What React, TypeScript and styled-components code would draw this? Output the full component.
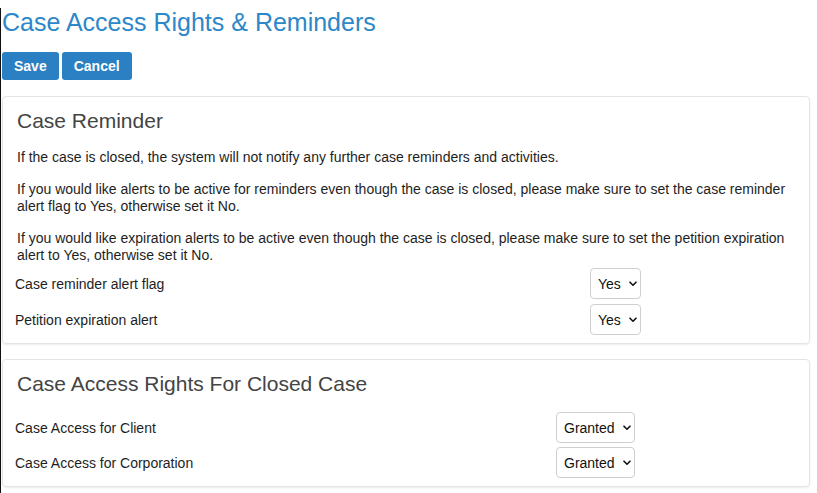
import React from "react";
import styled, { createGlobalStyle } from "styled-components";

const GlobalStyle = createGlobalStyle`
  html, body {
    margin: 0;
    padding: 0;
    background: #ffffff;
  }
  body {
    font-family: "Liberation Sans", Arial, Helvetica, sans-serif;
    color: #222;
  }
`;

const Page = styled.div`
  min-height: 493px;
  box-sizing: border-box;
  border-left: 1px solid #111;
  padding: 0 6px 0 1px;
`;

const Title = styled.h1`
  margin: 8px 0 0;
  font-size: 25px;
  line-height: 28px;
  font-weight: 400;
  color: #2d87c8;
`;

const Toolbar = styled.div`
  display: flex;
  gap: 3px;
  margin-top: 16px;
`;

const Button = styled.button`
  height: 28px;
  padding: 0 12px;
  border: none;
  border-radius: 3px;
  background: #2a80c2;
  color: #fff;
  font-family: "Liberation Sans", Arial, sans-serif;
  font-size: 14px;
  font-weight: 700;
  cursor: pointer;
`;

const Card = styled.section<{ $top: number }>`
  margin-top: ${(p) => p.$top}px;
  width: 808px;
  box-sizing: border-box;
  border: 1px solid #e4e4e4;
  border-radius: 4px;
  box-shadow: 0 1px 2px rgba(0, 0, 0, 0.08);
  padding: 12px 14px 8px;
`;

const CardTitle = styled.h2<{ $gap: number }>`
  margin: 0 0 ${(p) => p.$gap}px;
  font-size: 21px;
  line-height: 24px;
  font-weight: 400;
  color: #444;
`;

const Notes = styled.div`
  display: flex;
  flex-direction: column;
  gap: 15px;
  margin-bottom: 4px;
`;

const Note = styled.p`
  margin: 0;
  font-size: 14px;
  line-height: 17px;
  color: #1e1e1e;
`;

const Rows = styled.div<{ $gap: number }>`
  display: flex;
  flex-direction: column;
  gap: ${(p) => p.$gap}px;
  margin-left: -2px;
`;

const Row = styled.div<{ $labelWidth: number }>`
  display: grid;
  grid-template-columns: ${(p) => p.$labelWidth}px auto;
  align-items: center;
  justify-content: start;
`;

const Label = styled.span`
  font-size: 14px;
  color: #1e1e1e;
`;

const SelectWrap = styled.div`
  position: relative;
  display: inline-flex;
`;

const Select = styled.select`
  appearance: none;
  -webkit-appearance: none;
  height: 31px;
  padding: 0 19px 0 7px;
  border: 1px solid #cfcfcf;
  border-radius: 4px;
  background: #fff;
  color: #111;
  font-family: "Liberation Sans", Arial, sans-serif;
  font-size: 14px;
`;

const Chevron = styled.svg`
  position: absolute;
  right: 4px;
  top: 13px;
  pointer-events: none;
`;

interface DropdownProps {
  value: string;
  options: string[];
}

const Dropdown: React.FC<DropdownProps> = ({ value, options }) => (
  <SelectWrap>
    <Select defaultValue={value}>
      {options.map((o) => (
        <option key={o}>{o}</option>
      ))}
    </Select>
    <Chevron width="8" height="6" viewBox="0 0 8 6">
      <path d="M1 1.2 L4 4.2 L7 1.2" fill="none" stroke="#111" strokeWidth="1.6" strokeLinecap="round" strokeLinejoin="round" />
    </Chevron>
  </SelectWrap>
);

const reminderRows = [
  { label: "Case reminder alert flag", value: "Yes" },
  { label: "Petition expiration alert", value: "Yes" },
];

const accessRows = [
  { label: "Case Access for Client", value: "Granted" },
  { label: "Case Access for Corporation", value: "Granted" },
];

export default function App() {
  return (
    <Page>
      <GlobalStyle />
      <Title>Case Access Rights &amp; Reminders</Title>
      <Toolbar>
        <Button>Save</Button>
        <Button>Cancel</Button>
      </Toolbar>

      <Card $top={16}>
        <CardTitle $gap={16}>Case Reminder</CardTitle>
        <Notes>
          <Note>
            If the case is closed, the system will not notify any further case
            reminders and activities.
          </Note>
          <Note>
            If you would like alerts to be active for reminders even though the
            case is closed, please make sure to set the case reminder alert flag
            to Yes, otherwise set it No.
          </Note>
          <Note>
            If you would like expiration alerts to be active even though the case
            is closed, please make sure to set the petition expiration alert to
            Yes, otherwise set it No.
          </Note>
        </Notes>
        <Rows $gap={5}>
          {reminderRows.map((r) => (
            <Row key={r.label} $labelWidth={575}>
              <Label>{r.label}</Label>
              <Dropdown value={r.value} options={["Yes", "No"]} />
            </Row>
          ))}
        </Rows>
      </Card>

      <Card $top={15}>
        <CardTitle $gap={16}>Case Access Rights For Closed Case</CardTitle>
        <Rows $gap={4}>
          {accessRows.map((r) => (
            <Row key={r.label} $labelWidth={541}>
              <Label>{r.label}</Label>
              <Dropdown value={r.value} options={["Granted", "Denied"]} />
            </Row>
          ))}
        </Rows>
      </Card>
    </Page>
  );
}
